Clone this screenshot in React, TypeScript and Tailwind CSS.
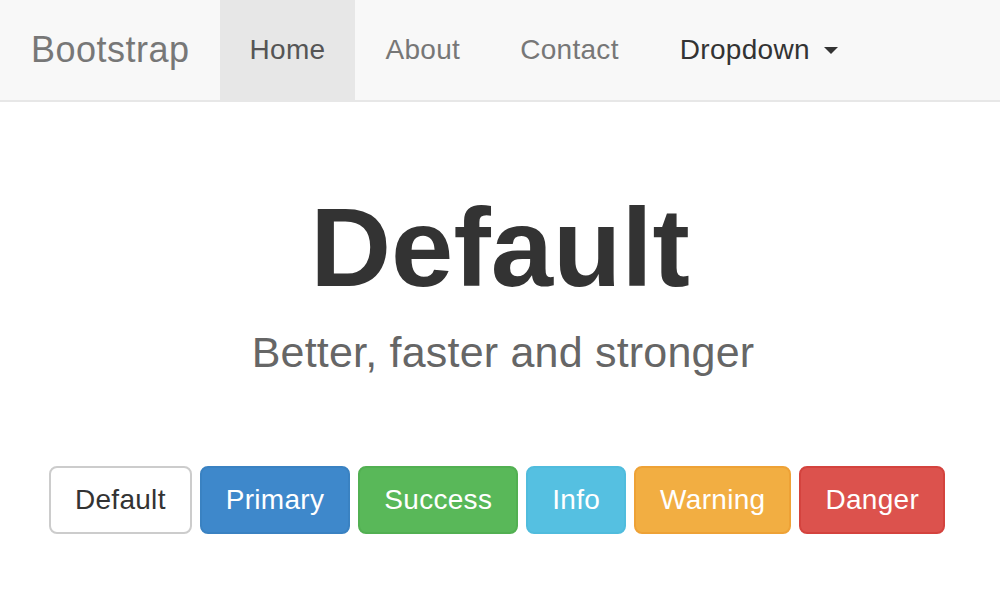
import React from "react";

const btnBase =
  "h-[68px] px-[24px] rounded-[8px] border-2 text-[28px] leading-[40px] tracking-[0.3px] flex items-center justify-center";

export default function App() {
  return (
    <div
      className="w-[1000px] h-[600px] bg-white overflow-hidden"
      style={{ fontFamily: '"Liberation Sans", Arial, sans-serif' }}
    >
      <nav className="h-[102px] bg-[#f8f8f8] border-b-2 border-[#e7e7e7] flex items-stretch">
        <a className="pl-[31px] pr-[30px] flex items-center text-[36px] leading-[40px] tracking-[0.5px] text-[#777]">
          Bootstrap
        </a>
        <a className="px-[30px] flex items-center text-[28px] leading-[40px] tracking-[0.3px] text-[#555] bg-[#e7e7e7]">
          Home
        </a>
        <a className="px-[30px] flex items-center text-[28px] leading-[40px] tracking-[0.3px] text-[#777]">
          About
        </a>
        <a className="pl-[30px] pr-[31px] flex items-center text-[28px] leading-[40px] tracking-[0.3px] text-[#777]">
          Contact
        </a>
        <a className="px-[30px] flex items-center text-[28px] leading-[40px] tracking-[0.3px] text-[#333]">
          Dropdown
          <span className="ml-[14px] w-0 h-0 border-l-[7px] border-r-[7px] border-t-[7px] border-l-transparent border-r-transparent border-t-[#333]" />
        </a>
      </nav>

      <div className="flex flex-col items-center">
        <h1 className="mt-[90px] text-[112px] leading-[112px] font-bold text-[#333]">
          Default
        </h1>
        <p className="mt-[23px] ml-[6px] text-[43px] leading-[50px] tracking-[0.2px] text-[#666]">
          Better, faster and stronger
        </p>
        <div className="mt-[89px] flex justify-center gap-[8px] pr-[6px]">
          <button className={`${btnBase} bg-white border-[#cccccc] text-[#333]`}>
            Default
          </button>
          <button className={`${btnBase} bg-[#3e88cb] border-[#3a82c2] text-white`}>
            Primary
          </button>
          <button className={`${btnBase} bg-[#59b859] border-[#52b052] text-white`}>
            Success
          </button>
          <button className={`${btnBase} bg-[#55c0e1] border-[#50bcdd] text-white`}>
            Info
          </button>
          <button className={`${btnBase} bg-[#f2ae42] border-[#eea236] text-white`}>
            Warning
          </button>
          <button className={`${btnBase} bg-[#dc524d] border-[#d4433e] text-white`}>
            Danger
          </button>
        </div>
      </div>
    </div>
  );
}
